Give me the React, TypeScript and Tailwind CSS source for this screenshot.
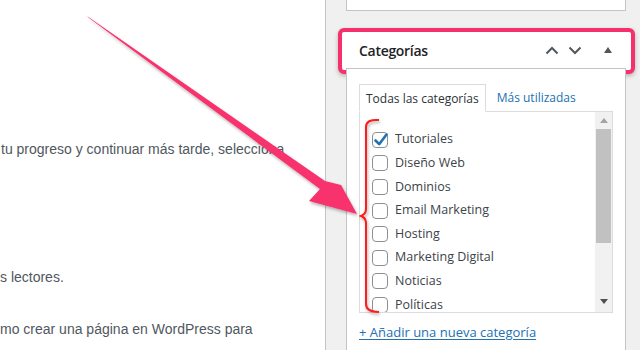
import React from 'react';

const categories = [
  { name: 'Tutoriales', checked: true },
  { name: 'Diseño Web', checked: false },
  { name: 'Dominios', checked: false },
  { name: 'Email Marketing', checked: false },
  { name: 'Hosting', checked: false },
  { name: 'Marketing Digital', checked: false },
  { name: 'Noticias', checked: false },
  { name: 'Políticas', checked: false },
];

function Checkbox({ checked }: { checked: boolean }) {
  return (
    <span className="relative flex h-4 w-4 shrink-0 items-center justify-center rounded-[4px] border border-[#8c8f94] bg-white">
      {checked && (
        <svg viewBox="0 0 20 20" className="absolute -left-[2px] -top-[3px] h-[20px] w-[20px]">
          <path d="M4.5 10.5 L8.2 14.2 L15.5 4.5" fill="none" stroke="#2271b1" strokeWidth="2.6" strokeLinecap="round" strokeLinejoin="round" />
        </svg>
      )}
    </span>
  );
}

function Chevron({ up }: { up?: boolean }) {
  return (
    <svg viewBox="0 0 14 9" className="h-[9px] w-[14px]">
      <path
        d={up ? 'M1.5 7.5 L7 2 L12.5 7.5' : 'M1.5 1.5 L7 7 L12.5 1.5'}
        fill="none"
        stroke="#50575e"
        strokeWidth="2"
      />
    </svg>
  );
}

export default function App() {
  return (
    <div className="relative flex h-[350px] w-[640px] overflow-hidden bg-[#f0f0f1] font-['Liberation_Sans',Arial,sans-serif]">
      {/* editor column */}
      <div className="w-[326px] shrink-0 border-r border-[#c3c4c7] bg-white text-[14px] leading-[18px] text-[#50575e]">
        <p className="mt-[140px] whitespace-nowrap pl-[1px]">tu progreso y continuar más tarde, selecciona</p>
        <p className="mt-[110px] whitespace-nowrap">s lectores.</p>
        <p className="mt-[34px] whitespace-nowrap">mo crear una página en WordPress para</p>
      </div>

      {/* sidebar */}
      <div className="relative flex-1 pl-[20px] pr-[15px] font-['Open_Sans','Noto_Sans',sans-serif]">
        <div className="h-[11px] border-x border-b border-[#c3c4c7] bg-white" />

        {/* highlight box behind header */}
        <div className="absolute left-[12px] top-[28px] h-[46px] w-[297px] rounded-[6px] border-[4px] border-[#f5306d] bg-white shadow-[0_2px_4px_rgba(0,0,0,0.25)]" />

        <div className="relative mt-[21px]">
          <div className="flex h-[37px] items-center border-b border-[#c3c4c7] pl-[13px]">
            <span className="text-[14px] font-semibold tracking-[-0.3px] text-[#1d2327]">Categorías</span>
            <div className="ml-auto flex items-center">
              <Chevron up />
              <span className="ml-[9px]"><Chevron /></span>
              <svg viewBox="0 0 8 6" className="ml-[22px] mr-[14px] h-[6px] w-[8px]">
                <path d="M0 6 L4 0 L8 6 Z" fill="#50575e" />
              </svg>
            </div>
          </div>

          <div className="border-x border-[#c3c4c7] bg-white px-[12px] pb-[20px] pt-[15px]">
            <div className="flex text-[12px]">
              <div className="relative z-10 -mb-px flex h-[28px] items-center border border-b-white border-[#dcdcde] bg-white px-[6px] pt-[1px] text-[#2c3338]">
                Todas las categorías
              </div>
              <div className="flex h-[27px] items-center pl-[11px] pt-[1px] text-[#2271b1]">Más utilizadas</div>
            </div>

            <div className="flex h-[202px] w-[254px] overflow-hidden border border-[#dcdcde] bg-white">
              <ul className="flex-1 pl-[12px] pt-[16px]">
                {categories.map((c) => (
                  <li key={c.name} className="flex h-[23.6px] items-center gap-[7px] text-[12.5px] text-[#3c434a]">
                    <Checkbox checked={c.checked} />
                    <span>{c.name}</span>
                  </li>
                ))}
              </ul>
              <div className="flex w-[17px] flex-col bg-[#f1f1f1]">
                <div className="flex h-[17px] items-center justify-center">
                  <svg viewBox="0 0 8 5" className="h-[5px] w-[8px]">
                    <path d="M0 5 L4 0 L8 5 Z" fill="#a3a3a3" />
                  </svg>
                </div>
                <div className="mx-[1px] h-[114px] bg-[#c1c1c1]" />
                <div className="flex-1" />
                <div className="flex h-[22px] items-center justify-center">
                  <svg viewBox="0 0 8 5" className="h-[5px] w-[8px]">
                    <path d="M0 0 L4 5 L8 0 Z" fill="#505050" />
                  </svg>
                </div>
              </div>
            </div>

            <a className="mt-[10px] block text-[13px] text-[#2271b1] underline underline-offset-[2px]">
              + Añadir una nueva categoría
            </a>
          </div>
        </div>
      </div>

      {/* annotations */}
      <svg className="pointer-events-none absolute left-0 top-0 h-[350px] w-[640px]" viewBox="0 0 640 350">
        <defs>
          <filter id="sh" x="-10%" y="-10%" width="120%" height="120%">
            <feDropShadow dx="1" dy="2" stdDeviation="1.5" floodColor="#000" floodOpacity="0.3" />
          </filter>
        </defs>
        <path
          d="M379 120 Q366 119 366 127 L366 209 Q366 214 361 216 Q366 218 366 223 L366 304 Q366 312 379 312"
          fill="none"
          stroke="#ff1a1a"
          strokeWidth="2"
          filter="url(#sh)"
        />
        <polygon
          points="87,16 89,18 320,189 309,201 357,214 341,185 325,181"
          fill="#f7306c"
          filter="url(#sh)"
        />
      </svg>
    </div>
  );
}
